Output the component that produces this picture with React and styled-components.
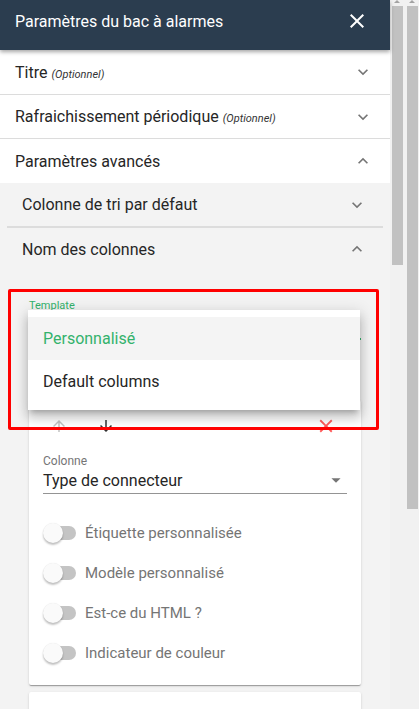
import styled, { createGlobalStyle } from "styled-components";

const GlobalStyle = createGlobalStyle`
  html, body {
    margin: 0;
    padding: 0;
    background: #f1f1f1;
    font-family: Roboto, "Noto Sans", sans-serif;
  }
`;

const GREEN = "#33b26c";

const Icon = ({ d, size = 24, color = "currentColor" }) => (
  <svg width={size} height={size} viewBox="0 0 24 24" fill={color}>
    <path d={d} />
  </svg>
);

const CLOSE =
  "M19 6.41L17.59 5 12 10.59 6.41 5 5 6.41 10.59 12 5 17.59 6.41 19 12 13.41 17.59 19 19 17.59 13.41 12z";
const MORE = "M16.59 8.59L12 13.17 7.41 8.59 6 10l6 6 6-6z";
const LESS = "M12 8l-6 6 1.41 1.41L12 10.83l4.59 4.58L18 14z";
const UP = "M4 12l1.41 1.41L11 7.83V20h2V7.83l5.58 5.59L20 12l-8-8-8 8z";
const DOWN = "M20 12l-1.41-1.41L13 16.17V4h-2v12.17l-5.58-5.59L4 12l8 8 8-8z";
const DROP = "M7 10l5 5 5-5z";

const Page = styled.div`
  position: relative;
  display: flex;
  align-items: flex-start;
  width: 419px;
  height: 709px;
  overflow: hidden;
  background: #f1f1f1;
`;

const Panel = styled.div`
  width: 390px;
  height: 709px;
  flex-shrink: 0;
  background: #f3f3f3;
`;

const Header = styled.div`
  height: 50px;
  display: flex;
  align-items: center;
  justify-content: space-between;
  padding: 0 21px 8px 15px;
  background: #2b3d4f;
  color: #fff;
  font-size: 16px;
  box-shadow: 0 2px 4px rgba(0, 0, 0, 0.35);
  position: relative;
  z-index: 2;
  box-sizing: border-box;
`;

const Row = styled.div`
  display: flex;
  align-items: center;
  justify-content: space-between;
  box-sizing: border-box;
  height: ${(p) => p.$h || 44}px;
  padding: 0 ${(p) => p.$pr || 17}px 0 15px;
  background: ${(p) => (p.$grey ? "#f3f3f3" : "#fff")};
  border-bottom: ${(p) => (p.$line ? `${p.$line}px solid #dcdcdc` : "none")};
  font-size: 16px;
  color: #757575;
  span.t {
    color: #262626;
  }
`;

const Opt = styled.i`
  font-size: 11px;
  color: #333;
  margin-left: 4px;
`;

const Grey = styled.div`
  padding: 0 7px;
`;

const Content = styled.div`
  padding: 30px 22px 0;
`;

const Field = styled.div`
  position: relative;
  margin-bottom: 60px;
`;

const FieldLabel = styled.div`
  font-size: ${(p) => p.$size || 11}px;
  line-height: 12px;
  height: 12px;
  color: ${(p) => p.$color || "#757575"};
`;

const FieldValue = styled.div`
  display: flex;
  align-items: center;
  justify-content: space-between;
  height: ${(p) => p.$h || 26}px;
  font-size: 16px;
  color: #262626;
  border-bottom: ${(p) => p.$line};
`;

const Menu = styled.div`
  position: absolute;
  top: 10px;
  left: -1px;
  width: 332px;
  padding: 7px 0;
  background: #fff;
  box-shadow: 0 5px 5px -3px rgba(0, 0, 0, 0.2), 0 8px 10px 1px rgba(0, 0, 0, 0.14),
    0 3px 14px 2px rgba(0, 0, 0, 0.12);
  z-index: 3;
`;

const MenuItem = styled.div`
  height: 43px;
  display: flex;
  align-items: center;
  padding-left: 15px;
  font-size: 16px;
  color: ${(p) => (p.$active ? GREEN : "#262626")};
  background: ${(p) => (p.$active ? "#f4f4f4" : "#fff")};
`;

const Card = styled.div`
  background: #fff;
  padding: 10px 14px 12px;
  margin-bottom: 7px;
  box-shadow: 0 2px 1px -1px rgba(0, 0, 0, 0.2), 0 1px 1px rgba(0, 0, 0, 0.14),
    0 1px 3px rgba(0, 0, 0, 0.12);
  border-radius: 2px;
  min-height: ${(p) => p.$min || 0}px;
`;

const ActionRow = styled.div`
  display: flex;
  align-items: center;
  height: 32px;
  padding-left: 7px;
  gap: 29px;
`;

const ActionIcon = styled.div`
  display: flex;
  color: ${(p) => p.$color};
  margin-left: ${(p) => (p.$push ? "auto" : 0)};
  margin-right: ${(p) => (p.$push ? "10px" : 0)};
`;

const Select = styled.div`
  margin-top: 13px;
`;

const Toggles = styled.div`
  margin-top: 19px;
`;

const ToggleRow = styled.div`
  height: 40px;
  display: flex;
  align-items: center;
  gap: 9px;
  font-size: 15px;
  color: #757575;
`;

const Switch = styled.div`
  position: relative;
  width: 33px;
  height: 14px;
  flex-shrink: 0;
  &::before {
    content: "";
    position: absolute;
    left: 4px;
    right: 0;
    top: 0;
    height: 14px;
    border-radius: 7px;
    background: #c4c4c4;
  }
  &::after {
    content: "";
    position: absolute;
    left: 0;
    top: -3px;
    width: 20px;
    height: 20px;
    border-radius: 50%;
    background: #fafafa;
    box-shadow: 0 2px 2px rgba(0, 0, 0, 0.24), 0 0 1px rgba(0, 0, 0, 0.12);
  }
`;

const Bars = styled.div`
  display: flex;
  gap: 4px;
  padding-left: 2px;
`;

const Scrollbar = styled.div`
  position: relative;
  width: 11px;
  padding-top: 6px;
  &::before {
    content: "";
    position: absolute;
    top: 0;
    left: 2px;
    border-left: 3.5px solid transparent;
    border-right: 3.5px solid transparent;
    border-bottom: 3px solid #a3a3a3;
  }
`;

const Thumb = styled.div`
  width: 11px;
  height: ${(p) => p.$h}px;
  background: #c1c1c1;
`;

const Annotation = styled.div`
  position: absolute;
  left: 8px;
  top: 289px;
  width: 365px;
  height: 135px;
  border: 3px solid #ff0000;
  border-radius: 2px;
  z-index: 5;
  pointer-events: none;
`;

const toggles = [
  "Étiquette personnalisée",
  "Modèle personnalisé",
  "Est-ce du HTML ?",
  "Indicateur de couleur",
];

export default function App() {
  return (
    <Page>
      <GlobalStyle />
      <Panel>
        <Header>
          <span>Paramètres du bac à alarmes</span>
          <Icon d={CLOSE} color="#fff" />
        </Header>
        <Row $h={45} $line={1}>
          <span className="t">
            Titre<Opt>(Optionnel)</Opt>
          </span>
          <Icon d={MORE} size={20} />
        </Row>
        <Row $h={44} $line={1}>
          <span className="t">
            Rafraichissement périodique<Opt>(Optionnel)</Opt>
          </span>
          <Icon d={MORE} size={20} />
        </Row>
        <Row $h={44}>
          <span className="t">Paramètres avancés</span>
          <Icon d={LESS} size={20} />
        </Row>
        <Grey>
          <Row $grey $h={45} $pr={16} $line={2}>
            <span className="t">Colonne de tri par défaut</span>
            <Icon d={MORE} size={20} />
          </Row>
          <Row $grey $h={42} $pr={16}>
            <span className="t">Nom des colonnes</span>
            <Icon d={LESS} size={20} />
          </Row>
          <Content>
            <Field>
              <FieldLabel $color={GREEN}>Template</FieldLabel>
              <FieldValue $line={`2px solid ${GREEN}`}>Personnalisé</FieldValue>
              <Menu>
                <MenuItem $active>Personnalisé</MenuItem>
                <MenuItem>Default columns</MenuItem>
              </Menu>
            </Field>
            <Card>
              <ActionRow>
                <ActionIcon $color="#c2c2c2">
                  <Icon d={UP} size={18} />
                </ActionIcon>
                <ActionIcon $color="#333">
                  <Icon d={DOWN} size={18} />
                </ActionIcon>
                <ActionIcon $color="#ff5a5a" $push>
                  <Icon d={CLOSE} size={22} />
                </ActionIcon>
              </ActionRow>
              <Select>
                <FieldLabel $size={12}>Colonne</FieldLabel>
                <FieldValue $h={26} $line="1px solid #949494">
                  Type de connecteur
                  <Icon d={DROP} size={22} color="#757575" />
                </FieldValue>
              </Select>
              <Toggles>
                {toggles.map((t) => (
                  <ToggleRow key={t}>
                    <Switch />
                    {t}
                  </ToggleRow>
                ))}
              </Toggles>
            </Card>
            <Card $min={60} />
          </Content>
        </Grey>
      </Panel>
      <Bars>
        <Scrollbar>
          <Thumb $h={259} />
        </Scrollbar>
        <Scrollbar>
          <Thumb $h={503} />
        </Scrollbar>
      </Bars>
      <Annotation />
    </Page>
  );
}
